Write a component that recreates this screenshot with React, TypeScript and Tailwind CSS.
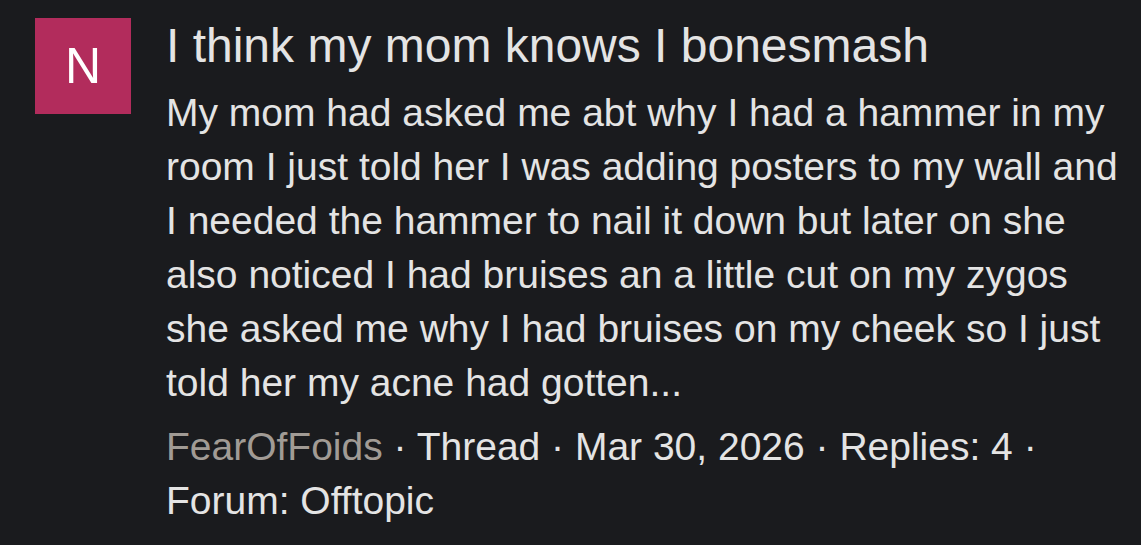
export default function App() {
  return (
    <div
      className="w-[1141px] h-[545px] bg-[#1a1b1e] overflow-hidden"
      style={{ fontFamily: '"Liberation Sans", Arial, sans-serif' }}
    >
      <div className="flex pl-[35px] pt-[18px] gap-[35px]">
        <div className="w-[96px] h-[96px] shrink-0 bg-[#b22c5c] flex items-center justify-center text-white text-[50px] leading-none">
          N
        </div>
        <div className="w-[962px] text-[#e4e4e4]">
          <div className="text-[48px] leading-[56px]">I think my mom knows I bonesmash</div>
          <div className="mt-[12px] text-[39px] leading-[54px]">
            My mom had asked me abt why I had a hammer in my room I just told her I was adding posters to my wall and I needed the hammer to nail it down but later on she also noticed I had bruises an a little cut on my zygos she asked me why I had bruises on my cheek so I just told her my acne had gotten...
          </div>
          <p className="mt-[10px] text-[39px] leading-[54px]">
            <span className="text-[#a19b95]">FearOfFoids</span>
            {" · Thread · Mar 30, 2026 · Replies: 4 · Forum: Offtopic"}
          </p>
        </div>
      </div>
    </div>
  );
}
